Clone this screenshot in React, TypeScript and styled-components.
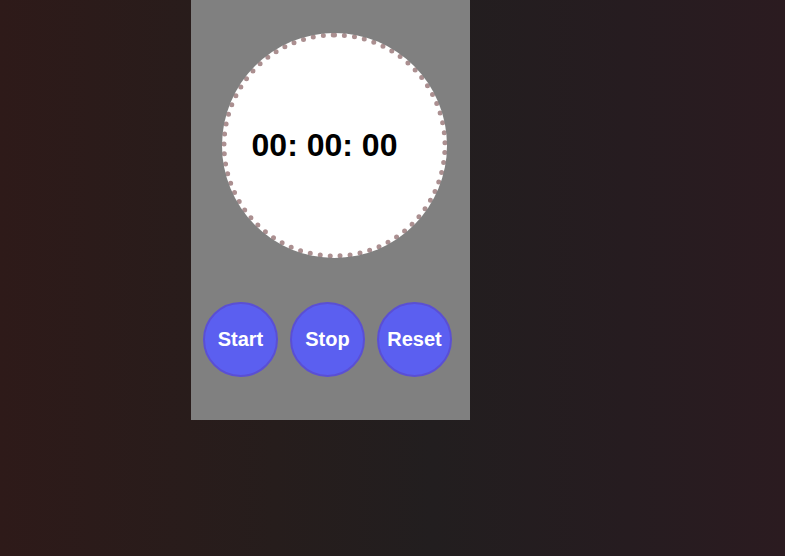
import styled, { createGlobalStyle } from 'styled-components';

const GlobalStyle = createGlobalStyle`
	html, body {
		margin: 0;
		padding: 0;
		height: 100%;
	}
	body {
		background: linear-gradient(90deg, #2e1a19 0%, #261d1c 35%, #221e1f 55%, #261c20 80%, #2b1b20 100%);
		font-family: 'Liberation Sans', Arial, sans-serif;
	}
	#root {
		height: 100%;
	}
`;

export default function App() {
	return (
		<>
			<GlobalStyle />
			<Page>
				<Panel>
					<Dial>
						<Time>00: 00: 00</Time>
					</Dial>
					<Controls>
						<RoundButton>Start</RoundButton>
						<RoundButton>Stop</RoundButton>
						<RoundButton>Reset</RoundButton>
					</Controls>
				</Panel>
			</Page>
		</>
	);
}

const Page = styled.div`
	height: 100%;
	padding-left: 191px;
`;

const Panel = styled.div`
	width: 279px;
	height: 420px;
	background: #808080;
	display: flex;
	flex-direction: column;
	padding-top: 33px;
	box-sizing: border-box;
`;

const Dial = styled.div`
	width: 225px;
	height: 225px;
	margin-left: 31px;
	border-radius: 50%;
	border: 5px dotted #ab8f90;
	box-sizing: border-box;
	background: #fff;
	display: flex;
	align-items: center;
	justify-content: center;
	padding-right: 20px;
`;

const Time = styled.div`
	font-size: 32px;
	font-weight: 700;
	color: #000;
	white-space: nowrap;
`;

const Controls = styled.div`
	display: flex;
	gap: 12px;
	margin-top: 44px;
	padding-left: 12px;
`;

const RoundButton = styled.button`
	width: 75px;
	height: 75px;
	border-radius: 50%;
	border: 2px solid #5a4fd4;
	background: #5b5ff0;
	color: #fff;
	font-family: 'Liberation Sans', Arial, sans-serif;
	font-size: 20px;
	font-weight: 700;
	padding: 0;
	cursor: pointer;
`;
